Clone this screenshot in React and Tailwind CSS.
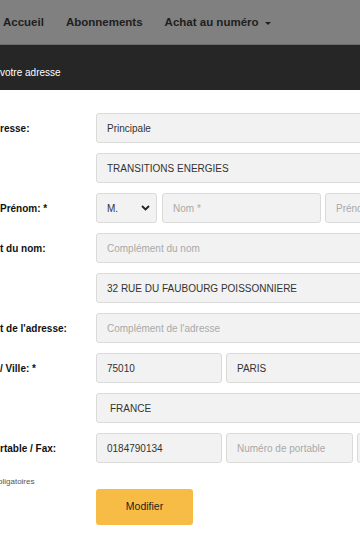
import React from "react";

const font = { fontFamily: '"Liberation Sans", Arial, Helvetica, sans-serif' };

function Field({ value, placeholder, className = "", textClass = "pl-[10px]" }) {
  return (
    <div
      className={`h-[30px] shrink-0 rounded-[3px] border border-[#dadada] bg-[#f2f2f2] flex items-center ${textClass} text-[10px] whitespace-nowrap overflow-hidden ${className}`}
    >
      {value ? (
        <span className="text-[#333]">{value}</span>
      ) : (
        <span className="text-[#a9a9a9]">{placeholder}</span>
      )}
    </div>
  );
}

function Row({ label, children }) {
  return (
    <div className="flex items-center h-[30px]">
      <div className="w-[96px] shrink-0 text-[10px] font-bold text-[#111] whitespace-nowrap overflow-hidden">
        {label}
      </div>
      <div className="flex gap-[4px] flex-1 min-w-0">{children}</div>
    </div>
  );
}

export default function App() {
  return (
    <div className="w-[360px] h-[540px] overflow-hidden bg-white" style={font}>
      <nav className="h-[45px] bg-[#808080] border-b border-[#6b6b6b] flex items-center pl-[3px] pt-[1px] text-[11.5px] font-bold text-[#1e1e1e] gap-[22px]">
        <span>Accueil</span>
        <span>Abonnements</span>
        <span className="flex items-center">
          Achat au numéro
          <span className="ml-[6px] mt-[1px] w-0 h-0 border-x-[3px] border-x-transparent border-t-[3px] border-t-[#1e1e1e]" />
        </span>
      </nav>
      <div className="h-[45px] bg-[#262626] flex items-center pt-[9px] text-[10px] text-white">
        <span>votre adresse</span>
      </div>

      <div className="pt-[23px] flex flex-col gap-[10px] w-[460px]">
        <Row label="resse:">
          <Field value="Principale" className="w-[300px]" />
        </Row>
        <Row label="">
          <Field value="TRANSITIONS ENERGIES" className="w-[300px]" />
        </Row>
        <Row label="Prénom: *">
          <div className="w-[61px] h-[30px] shrink-0 rounded-[3px] border border-[#dadada] bg-[#f2f2f2] flex items-center justify-between pl-[10px] pr-[6px] text-[10px] text-[#333]">
            <span>M.</span>
            <svg width="9" height="6" viewBox="0 0 9 6" fill="none">
              <path d="M1 1l3.5 3.5L8 1" stroke="#222" strokeWidth="1.8" />
            </svg>
          </div>
          <Field placeholder="Nom *" className="w-[159px] ml-[1px]" />
          <Field placeholder="Prénom" className="w-[120px]" />
        </Row>
        <Row label="t du nom:">
          <Field placeholder="Complément du nom" className="w-[300px]" />
        </Row>
        <Row label="">
          <Field value="32 RUE DU FAUBOURG POISSONNIERE" className="w-[300px]" />
        </Row>
        <Row label="t de l'adresse:">
          <Field placeholder="Complément de l'adresse" className="w-[300px]" />
        </Row>
        <Row label="/ Ville: *">
          <Field value="75010" className="w-[126px]" />
          <Field value="PARIS" className="w-[200px]" />
        </Row>
        <Row label="">
          <Field value="FRANCE" className="w-[300px]" textClass="pl-[13px]" />
        </Row>
        <Row label="rtable / Fax:">
          <Field value="0184790134" className="w-[126px]" />
          <Field placeholder="Numéro de portable" className="w-[127px]" />
          <Field placeholder="" className="w-[127px]" />
        </Row>
      </div>

      <div className="mt-[14px] text-[8px] text-[#555] -ml-[2px] leading-[10px]">bligatoires</div>
      <div className="pl-[96px] mt-[2px]">
        <button className="w-[97px] h-[36px] rounded-[3px] bg-[#f7bc45] text-[10.5px] text-[#222]">
          Modifier
        </button>
      </div>
    </div>
  );
}
